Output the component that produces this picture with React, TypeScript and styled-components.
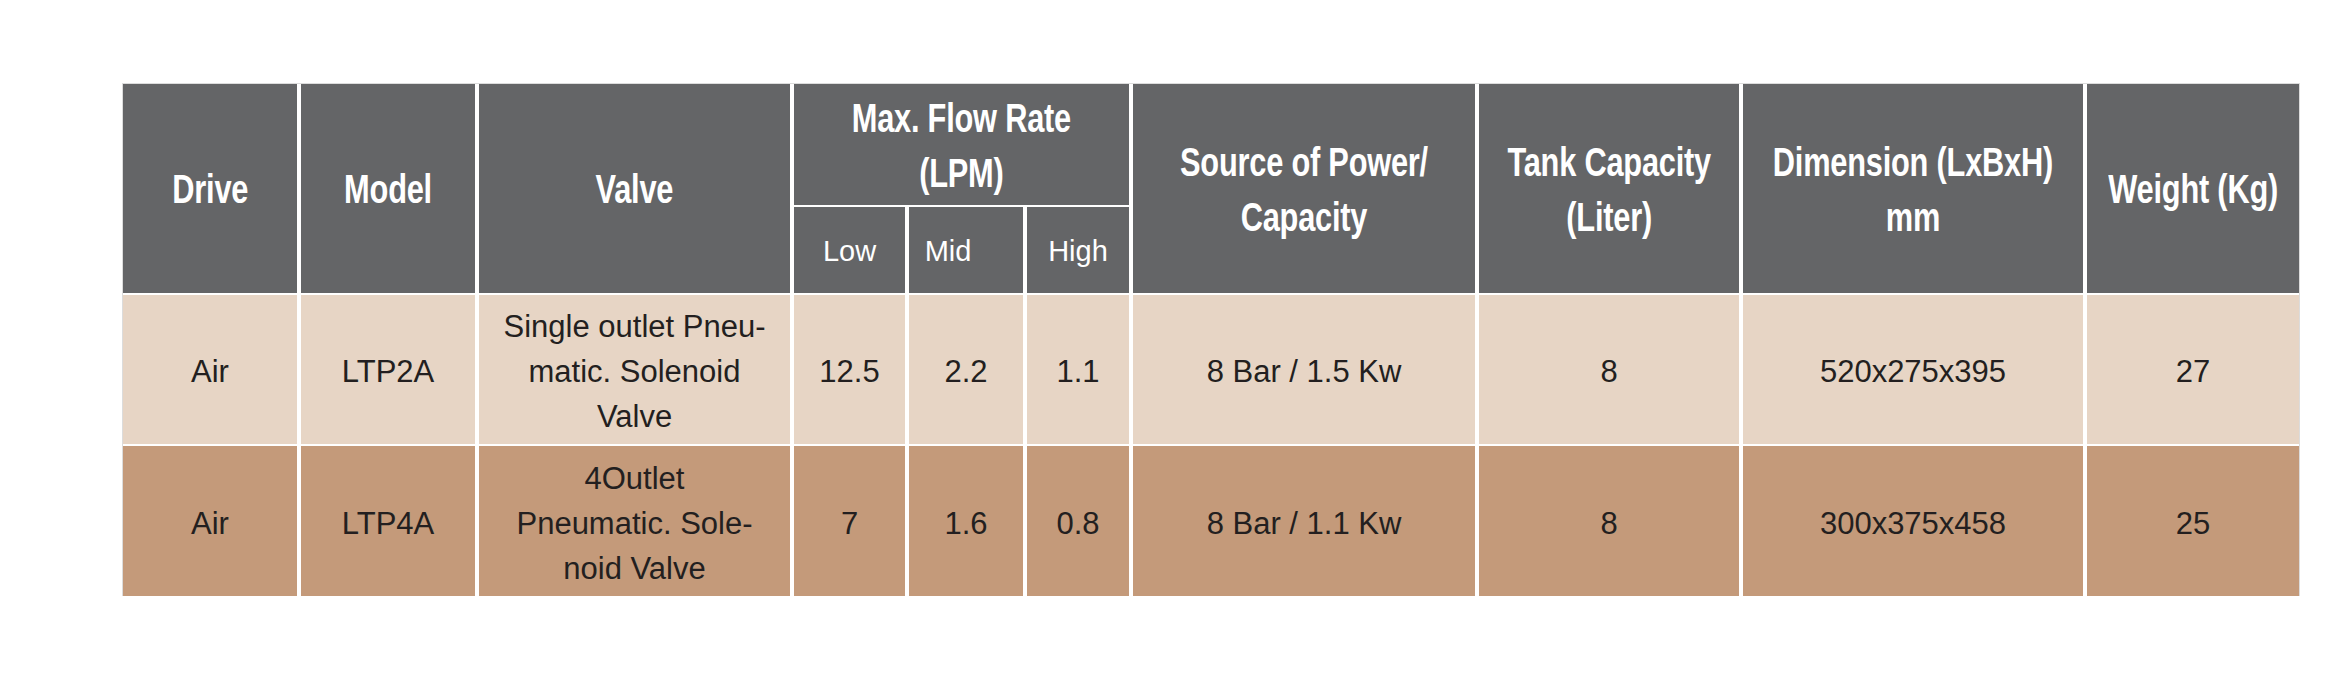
import React from 'react';
import styled, { createGlobalStyle } from 'styled-components';

const GlobalStyle = createGlobalStyle`
  body {
    margin: 0;
    background: #ffffff;
  }
`;

const Page = styled.div`
  padding: 84px 0 0 123px;
`;

const Table = styled.div`
  display: grid;
  grid-template-columns: 174px 174px 311px 111px 114px 102px 342px 260px 340px 212px;
  grid-template-rows: 121px 86px 149px 150px;
  column-gap: 4px;
  row-gap: 2px;
  width: max-content;
  background: #ffffff;
  outline: 1px solid #dcdcdc;
`;

const HeadCell = styled.div<{ $col: string; $row: string }>`
  grid-column: ${(p) => p.$col};
  grid-row: ${(p) => p.$row};
  background: #646567;
  color: #ffffff;
  display: flex;
  align-items: center;
  justify-content: center;
  text-align: center;
  font-family: 'Liberation Sans', Arial, sans-serif;
  font-weight: 700;
  font-size: 40px;
  line-height: 55px;
  white-space: nowrap;
  padding-top: 2px;
  overflow: hidden;
`;

// condensed bold look of the print header
const HeadLabel = styled.span`
  display: inline-block;
  transform: scaleX(0.77);
  transform-origin: center;
  letter-spacing: -0.3px;
`;

const SubHead = styled.div<{ $shift?: number }>`
  background: #646567;
  color: #ffffff;
  display: flex;
  align-items: center;
  justify-content: center;
  font-family: 'Liberation Sans', Arial, sans-serif;
  font-size: 29px;
  padding-right: ${(p) => p.$shift ?? 0}px;
  padding-top: 2px;
`;

const Cell = styled.div<{ $tone: 'light' | 'dark' }>`
  background: ${(p) => (p.$tone === 'light' ? '#e7d5c5' : '#c49a7a')};
  color: #231f20;
  display: flex;
  align-items: center;
  justify-content: center;
  text-align: center;
  font-family: 'Liberation Sans', Arial, sans-serif;
  font-size: 31px;
  line-height: 45px;
  white-space: nowrap;
  padding-top: 4px;
`;

type Row = {
  drive: string;
  model: string;
  valve: string[];
  low: string;
  mid: string;
  high: string;
  power: string;
  tank: string;
  dim: string;
  weight: string;
};

const rows: Row[] = [
  {
    drive: 'Air',
    model: 'LTP2A',
    valve: ['Single outlet Pneu-', 'matic. Solenoid', 'Valve'],
    low: '12.5',
    mid: '2.2',
    high: '1.1',
    power: '8 Bar / 1.5 Kw',
    tank: '8',
    dim: '520x275x395',
    weight: '27',
  },
  {
    drive: 'Air',
    model: 'LTP4A',
    valve: ['4Outlet', 'Pneumatic. Sole-', 'noid Valve'],
    low: '7',
    mid: '1.6',
    high: '0.8',
    power: '8 Bar / 1.1 Kw',
    tank: '8',
    dim: '300x375x458',
    weight: '25',
  },
];

const lines = (parts: string[]) =>
  parts.map((p, i) => (
    <React.Fragment key={i}>
      {i > 0 && <br />}
      {p}
    </React.Fragment>
  ));

const headers: { col: string; row: string; text: string[] }[] = [
  { col: '1', row: '1 / 3', text: ['Drive'] },
  { col: '2', row: '1 / 3', text: ['Model'] },
  { col: '3', row: '1 / 3', text: ['Valve'] },
  { col: '4 / 7', row: '1', text: ['Max. Flow Rate', '(LPM)'] },
  { col: '7', row: '1 / 3', text: ['Source of Power/', 'Capacity'] },
  { col: '8', row: '1 / 3', text: ['Tank Capacity', '(Liter)'] },
  { col: '9', row: '1 / 3', text: ['Dimension (LxBxH)', 'mm'] },
  { col: '10', row: '1 / 3', text: ['Weight (Kg)'] },
];

export default function App() {
  return (
    <>
      <GlobalStyle />
      <Page>
        <Table>
          {headers.map((h) => (
            <HeadCell key={h.col} $col={h.col} $row={h.row}>
              <HeadLabel>{lines(h.text)}</HeadLabel>
            </HeadCell>
          ))}
          <SubHead>Low</SubHead>
          <SubHead $shift={36}>Mid</SubHead>
          <SubHead>High</SubHead>
          {rows.map((r, i) => {
            const tone = i === 0 ? 'light' : 'dark';
            return (
              <React.Fragment key={r.model}>
                <Cell $tone={tone}>{r.drive}</Cell>
                <Cell $tone={tone}>{r.model}</Cell>
                <Cell $tone={tone}>
                  <div>{lines(r.valve)}</div>
                </Cell>
                <Cell $tone={tone}>{r.low}</Cell>
                <Cell $tone={tone}>{r.mid}</Cell>
                <Cell $tone={tone}>{r.high}</Cell>
                <Cell $tone={tone}>{r.power}</Cell>
                <Cell $tone={tone}>{r.tank}</Cell>
                <Cell $tone={tone}>{r.dim}</Cell>
                <Cell $tone={tone}>{r.weight}</Cell>
              </React.Fragment>
            );
          })}
        </Table>
      </Page>
    </>
  );
}
